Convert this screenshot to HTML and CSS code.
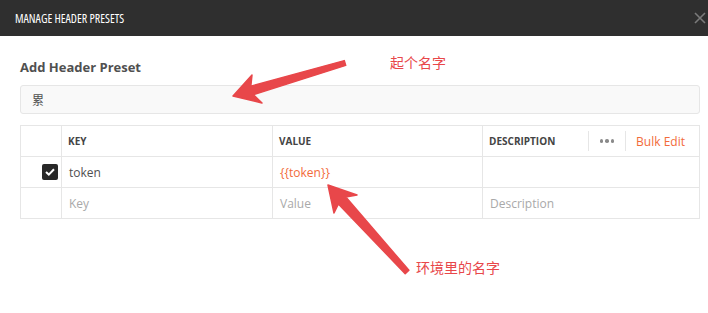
FILE: index.html
```html
<!DOCTYPE html>
<html lang="zh">
<head>
  <meta charset="UTF-8">
  <title>Manage Header Presets</title>
  <link rel="stylesheet" href="styles.css">
</head>
<body>
  <div class="modal">
    <div class="modal-header">
      <span class="modal-title">MANAGE HEADER PRESETS</span>
      <svg class="close" width="12" height="12" viewBox="0 0 12 12">
        <path d="M1 1L11 11M11 1L1 11" stroke="#7a7a7a" stroke-width="1.6"/>
      </svg>
    </div>

    <div class="modal-body">
      <div class="section-title">Add Header Preset</div>
      <div class="name-input">累</div>

      <div class="kv-table">
        <div class="cell"></div>
        <div class="cell head">KEY</div>
        <div class="cell head">VALUE</div>
        <div class="cell head head-desc">
          <span>DESCRIPTION</span>
          <div class="actions">
            <span class="sep"></span>
            <span class="dots">
              <i></i><i></i><i></i>
            </span>
            <span class="sep"></span>
            <span class="bulk">Bulk Edit</span>
          </div>
        </div>

        <div class="cell check-cell">
          <span class="checkbox">
            <svg width="10" height="8" viewBox="0 0 10 8">
              <path d="M1 4L3.8 6.6L9 1.2" stroke="#fff" stroke-width="2" fill="none"/>
            </svg>
          </span>
        </div>
        <div class="cell">token</div>
        <div class="cell var">{{token}}</div>
        <div class="cell"></div>

        <div class="cell"></div>
        <div class="cell placeholder">Key</div>
        <div class="cell placeholder">Value</div>
        <div class="cell placeholder">Description</div>
      </div>
    </div>
  </div>

  <!-- annotations -->
  <svg class="arrows" width="708" height="313" viewBox="0 0 708 313">
    <polygon points="233,96 252,75 250.8,86.1 344.3,60.6 345.7,65.4 253.4,94.7 262,103" />
    <polygon points="328,185 357,195 345.8,197.1 408.9,270.3 405.2,273.7 338.4,203.9 334,213" />
  </svg>
  <span class="note note-name">起个名字</span>
  <span class="note note-env">环境里的名字</span>
</body>
</html>
```

FILE: styles.css
```css
body {
  margin: 0;
  font-family: "Open Sans", "Noto Sans CJK SC", sans-serif;
  color: #505050;
  background: #fff;
  position: relative;
  width: 708px;
  height: 313px;
  overflow: hidden;
}
.modal-header {
  height: 36px;
  background-color: #2f2f2f;
  display: flex;
  align-items: center;
  justify-content: space-between;
  padding: 0 2px 0 15px;
}
.modal-title {
  color: #fff;
  font-size: 12px;
  font-stretch: 75%;
}
.modal-body {
  padding: 22px 8px 0 20px;
}
.section-title {
  font-size: 13px;
  font-weight: bold;
  line-height: 18px;
}
.name-input {
  margin-top: 9px;
  height: 27px;
  line-height: 27px;
  background-color: #f9f9f9;
  border: 1px solid #e6e6e6;
  border-radius: 3px;
  padding-left: 11px;
  font-size: 12px;
  font-family: "Noto Sans CJK SC", sans-serif;
}
.kv-table {
  margin-top: 11px;
  display: grid;
  grid-template-columns: 41px 211px 210px 1fr;
  grid-auto-rows: 31px;
  border-top: 1px solid #e6e6e6;
  border-left: 1px solid #e6e6e6;
}
.cell {
  border-right: 1px solid #e6e6e6;
  border-bottom: 1px solid #e6e6e6;
  display: flex;
  align-items: center;
  padding-left: 7px;
  font-size: 12px;
}
.head {
  font-size: 10px;
  font-weight: bold;
  color: #444;
  padding-left: 6px;
}
.head-desc {
  justify-content: space-between;
}
.actions {
  display: flex;
  align-items: center;
  height: 100%;
}
.sep {
  width: 1px;
  height: 20px;
  background-color: #e6e6e6;
}
.dots {
  display: flex;
  gap: 2px;
  padding: 0 11px 0 11px;
}
.dots i {
  width: 3.5px;
  height: 3.5px;
  border-radius: 50%;
  background-color: #8a8a8a;
}
.bulk {
  color: #f26b3a;
  font-weight: normal;
  font-size: 12px;
  padding: 0 14px 0 10px;
}
.check-cell {
  justify-content: flex-end;
  padding: 0 3px 0 0;
}
.checkbox {
  width: 16px;
  height: 16px;
  background-color: #282828;
  border-radius: 2px;
  display: flex;
  align-items: center;
  justify-content: center;
}
.var {
  color: #f26b3a;
}
.placeholder {
  color: #a9a9a9;
}
.arrows {
  position: absolute;
  left: 0;
  top: 0;
}
.arrows polygon {
  fill: #e8474a;
  stroke: #e8474a;
  stroke-width: 1.5;
  stroke-linejoin: round;
}
.note {
  position: absolute;
  color: #e8474a;
  font-family: "Noto Sans CJK SC", sans-serif;
  font-size: 14px;
  line-height: 16px;
}
.note-name {
  left: 390px;
  top: 54px;
}
.note-env {
  left: 416px;
  top: 259px;
}
```
